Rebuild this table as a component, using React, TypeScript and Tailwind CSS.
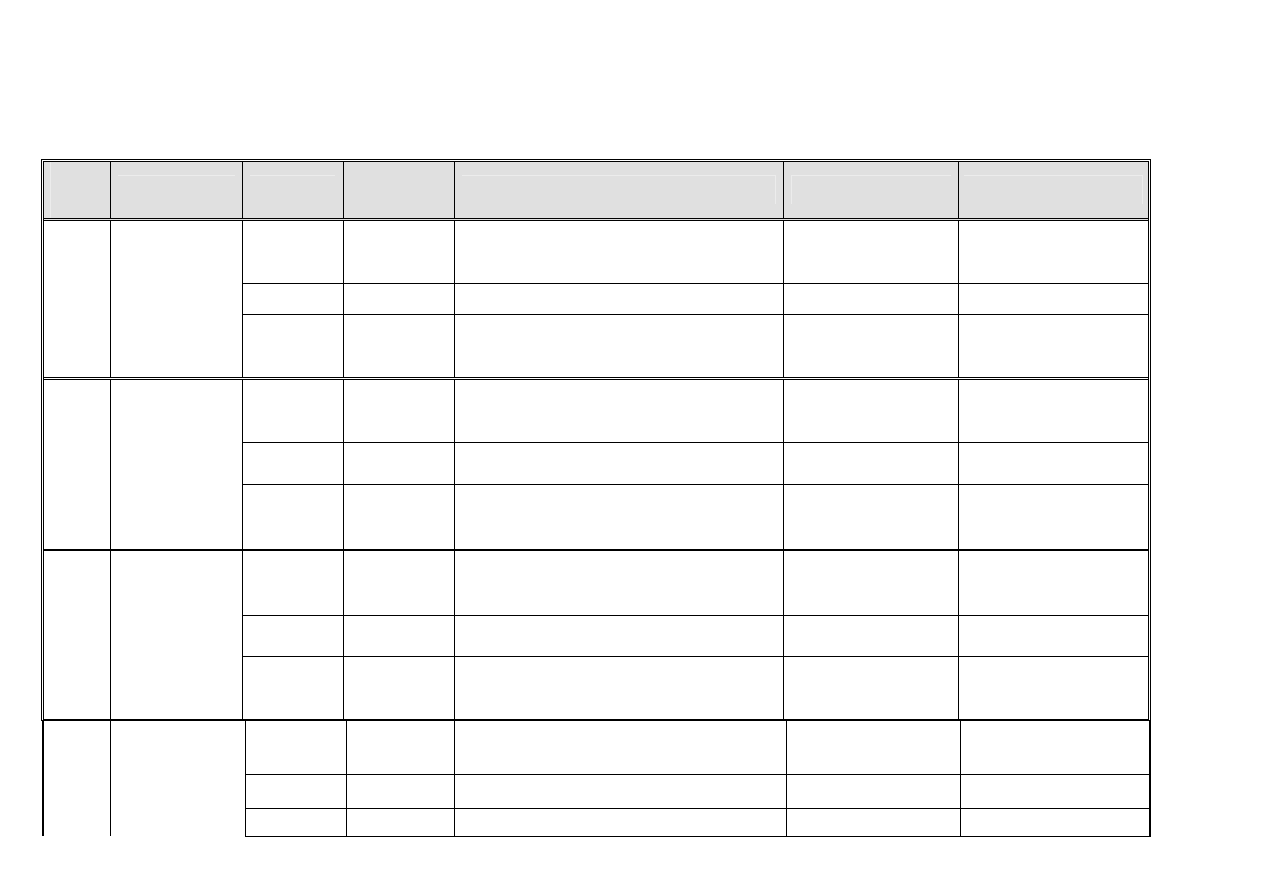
import React from "react";

// column classes for the right-hand part of each block (cols 3..7)
const subCols = [
  "w-[101px] border-l border-black",
  "w-[111px] border-l border-black",
  "w-[329px] border-l border-black",
  "w-[175px] border-l border-black",
  "flex-1 border-l border-black",
];

const lowerCols = [
  "w-[101px] border-l border-black",
  "w-[108px] border-l border-black",
  "w-[332px] border-l border-black",
  "w-[174px] border-l border-black",
  "flex-1 border-l border-black",
];

function SubRow({ h, first, cols }: { h: string; first?: boolean; cols: string[] }) {
  return (
    <div className={`flex ${h} ${first ? "" : "border-t border-black"}`}>
      {cols.map((c, i) => (
        <div key={i} className={c} />
      ))}
    </div>
  );
}

function Block({ heights, bottom }: { heights: string[]; bottom: string }) {
  return (
    <div className={`flex ${bottom}`}>
      <div className="w-[66px]" />
      <div className="w-[132px] border-l border-black" />
      <div className="flex-1 flex flex-col">
        {heights.map((h, i) => (
          <SubRow key={i} h={h} first={i === 0} cols={subCols} />
        ))}
      </div>
    </div>
  );
}

export default function App() {
  return (
    <div className="min-h-screen bg-white pt-[159px] pl-[41px]">
      {/* MAIN TABLE */}
      <div className="w-[1110px] border-[3px] border-double border-black border-b-2 [border-bottom-style:solid]">
        {/* HEADER */}
        <div className="flex h-[59px] bg-[#e0e0e0] border-b-[3px] border-double border-black">
          <div className="w-[66px] pl-[6px]">
            <div className="h-full border-l border-[#ececec]" />
          </div>
          <div className="w-[132px] border-l border-black px-[7px] pt-[13px]">
            <div className="border-t border-[#ececec]" />
          </div>
          <div className="w-[101px] border-l border-black pl-[7px] pr-[8px] pt-[13px]">
            <div className="border-t border-[#ececec]" />
          </div>
          <div className="w-[111px] border-l border-black" />
          <div className="w-[329px] border-l border-black pl-[7px] pr-[7px] pt-[13px]">
            <div className="h-[29px] border-t border-r border-[#ececec]" />
          </div>
          <div className="w-[175px] border-l border-black pl-[7px] pr-[7px] pt-[13px]">
            <div className="h-[29px] border-t border-l border-[#ececec]" />
          </div>
          <div className="flex-1 border-l border-black pl-[5px] pr-[5px] pt-[13px]">
            <div className="h-[29px] border-t border-r border-[#ececec]" />
          </div>
        </div>

        {/* GROUP 1 */}
        <Block
          heights={["h-[62px]", "h-[31px]", "h-[63px]"]}
          bottom="border-b-[3px] border-double border-black"
        />
        {/* GROUP 2 */}
        <Block
          heights={["h-[62px]", "h-[42px]", "h-[65px]"]}
          bottom="border-b-2 border-black"
        />
        {/* GROUP 3 */}
        <Block heights={["h-[64px]", "h-[41px]", "h-[63px]"]} bottom="" />
      </div>

      {/* GROUP 4 (continues below the table) */}
      <div className="ml-[1px] w-[1109px] flex items-start">
        <div className="w-[68px] h-[115px] border-l-2 border-black" />
        <div className="w-[135px] h-[115px] border-l border-black" />
        <div className="flex-1 flex flex-col border-r-2 border-b border-black">
          <SubRow h="h-[53px]" first cols={lowerCols} />
          <SubRow h="h-[34px]" cols={lowerCols} />
          <SubRow h="h-[28px]" cols={lowerCols} />
        </div>
      </div>
    </div>
  );
}
